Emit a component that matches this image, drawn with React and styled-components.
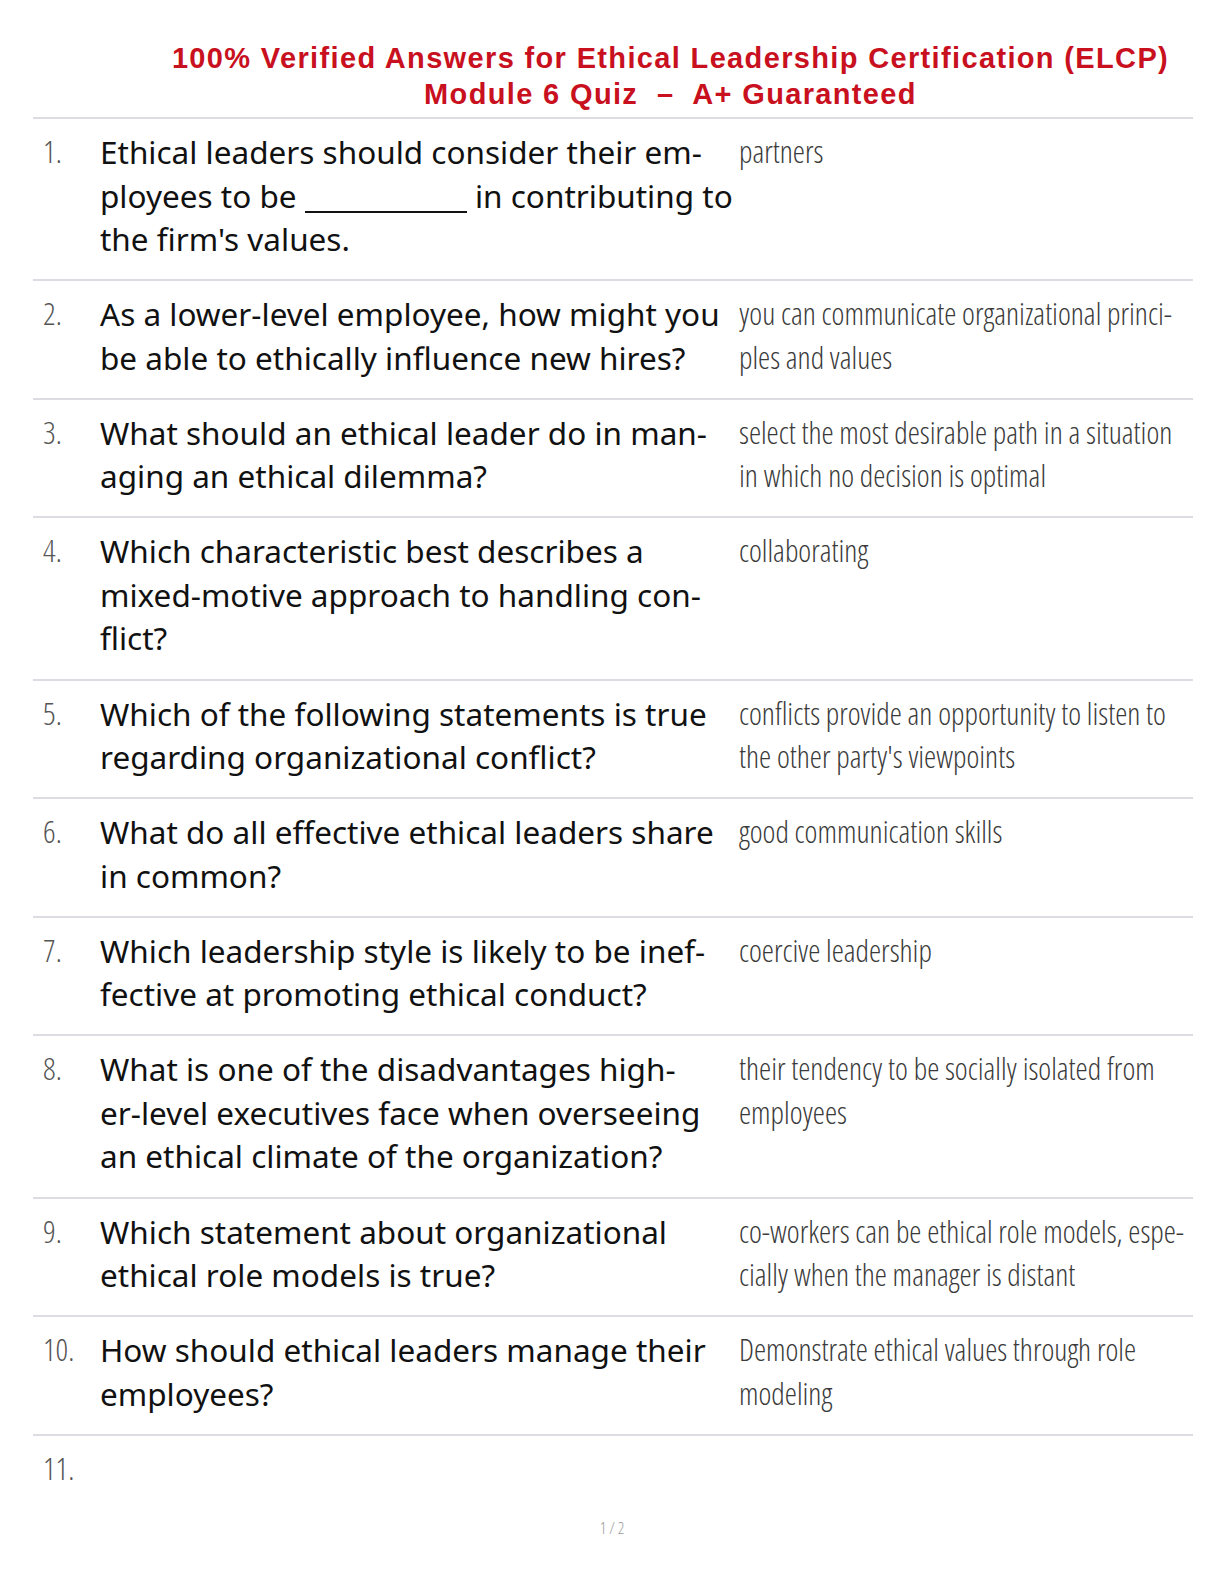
import React from "react";
import styled, { createGlobalStyle } from "styled-components";

const GlobalStyle = createGlobalStyle`
  html, body {
    margin: 0;
    padding: 0;
    background: #ffffff;
  }
  body {
    font-family: "Noto Sans", "Open Sans", sans-serif;
  }
`;

const Page = styled.div`
  width: 1224px;
  min-height: 1584px;
  box-sizing: border-box;
  padding: 0 31px 0 33px;
  display: flex;
  flex-direction: column;
`;

const Header = styled.header`
  padding: 40px 0 5px 115px;
  border-bottom: 2px solid #dcdce2;
  text-align: center;
`;

const Title = styled.h1`
  margin: 0;
  font-family: "Liberation Sans", Arial, sans-serif;
  font-weight: 700;
  font-size: 29px;
  line-height: 36px;
  letter-spacing: 1.35px;
  color: #c8101e;
`;

const List = styled.ol`
  list-style: none;
  margin: 0;
  padding: 0;
`;

const Row = styled.li`
  display: grid;
  grid-template-columns: 67px 639px 452px;
  padding: ${(p) => (p.$last ? "11px 0 0" : "11px 0 18.65px")};
  border-bottom: ${(p) => (p.$last ? "none" : "2px solid #dcdce2")};
`;

const Num = styled.span`
  padding-left: 10px;
  font-family: "Open Sans", "Noto Sans", sans-serif;
  font-weight: 300;
  font-stretch: 75%;
  font-size: 31px;
  line-height: 43.5px;
  color: #555555;
`;

const Question = styled.div`
  font-family: "Noto Sans", "Open Sans", sans-serif;
  font-weight: 400;
  font-size: 31.5px;
  line-height: 43.5px;
  color: #111111;
  hyphens: manual;
`;

const NoWrap = styled.span`
  white-space: nowrap;
`;

const Blank = styled.span`
  display: inline-block;
  width: 162px;
  height: 28px;
  margin-bottom: -5px;
  border-bottom: 2px solid #111111;
  vertical-align: baseline;
`;

const Answer = styled.div`
  font-family: "Open Sans", "Noto Sans", sans-serif;
  font-weight: 300;
  font-stretch: 75%;
  font-size: 30.7px;
  line-height: 43.5px;
  color: #3a3a3a;
  hyphens: manual;
`;

const Footer = styled.div`
  margin: 27px -31px 0 -33px;
  text-align: center;
  font-family: "Open Sans", "Noto Sans", sans-serif;
  font-weight: 300;
  font-stretch: 75%;
  font-size: 16px;
  line-height: 22px;
  color: #9a9a9a;
`;

const SH = "\u00AD";
const NB = "\u00A0";

const items = [
  {
    q: (
      <>
        Ethical leaders should consider their em{SH}ployees to be <Blank /> in contributing to the firm's values.
      </>
    ),
    a: "partners",
  },
  {
    q: "As a lower-level employee, how might you be able to ethically influence new hires?",
    a: `you can communicate organizational princi${SH}ples and values`,
  },
  {
    q: `What should an ethical leader do in man${SH}aging an ethical dilemma?`,
    a: `select the most desirable path in a situation in${NB}which no decision is optimal`,
  },
  {
    q: `Which characteristic best describes a mixed-motive approach to handling con${SH}flict?`,
    a: "collaborating",
  },
  {
    q: "Which of the following statements is true regarding organizational conflict?",
    a: "conflicts provide an opportunity to listen to the other party's viewpoints",
  },
  {
    q: "What do all effective ethical leaders share in common?",
    a: "good communication skills",
  },
  {
    q: `Which leadership style is likely to be inef${SH}fective at promoting ethical conduct?`,
    a: "coercive leadership",
  },
  {
    q: (
      <>
        What is one of the disadvantages high{SH}
        <NoWrap>er-level</NoWrap> executives face when overseeing an ethical climate of the organization?
      </>
    ),
    a: "their tendency to be socially isolated from employees",
  },
  {
    q: "Which statement about organizational ethical role models is true?",
    a: `co-workers can be ethical role models, espe${SH}cially when the manager is distant`,
  },
  {
    q: "How should ethical leaders manage their employees?",
    a: "Demonstrate ethical values through role modeling",
  },
];

export default function App() {
  return (
    <>
      <GlobalStyle />
      <Page>
        <Header>
          <Title>
            100% Verified Answers for Ethical Leadership Certification (ELCP)
            <br />
            Module 6 Quiz &nbsp;–&nbsp; A+ Guaranteed
          </Title>
        </Header>
        <List>
          {items.map((it, i) => (
            <Row key={i}>
              <Num>{i + 1}.</Num>
              <Question>{it.q}</Question>
              <Answer>{it.a}</Answer>
            </Row>
          ))}
          <Row $last>
            <Num>11.</Num>
            <Question />
            <Answer />
          </Row>
        </List>
        <Footer>1 / 2</Footer>
      </Page>
    </>
  );
}
